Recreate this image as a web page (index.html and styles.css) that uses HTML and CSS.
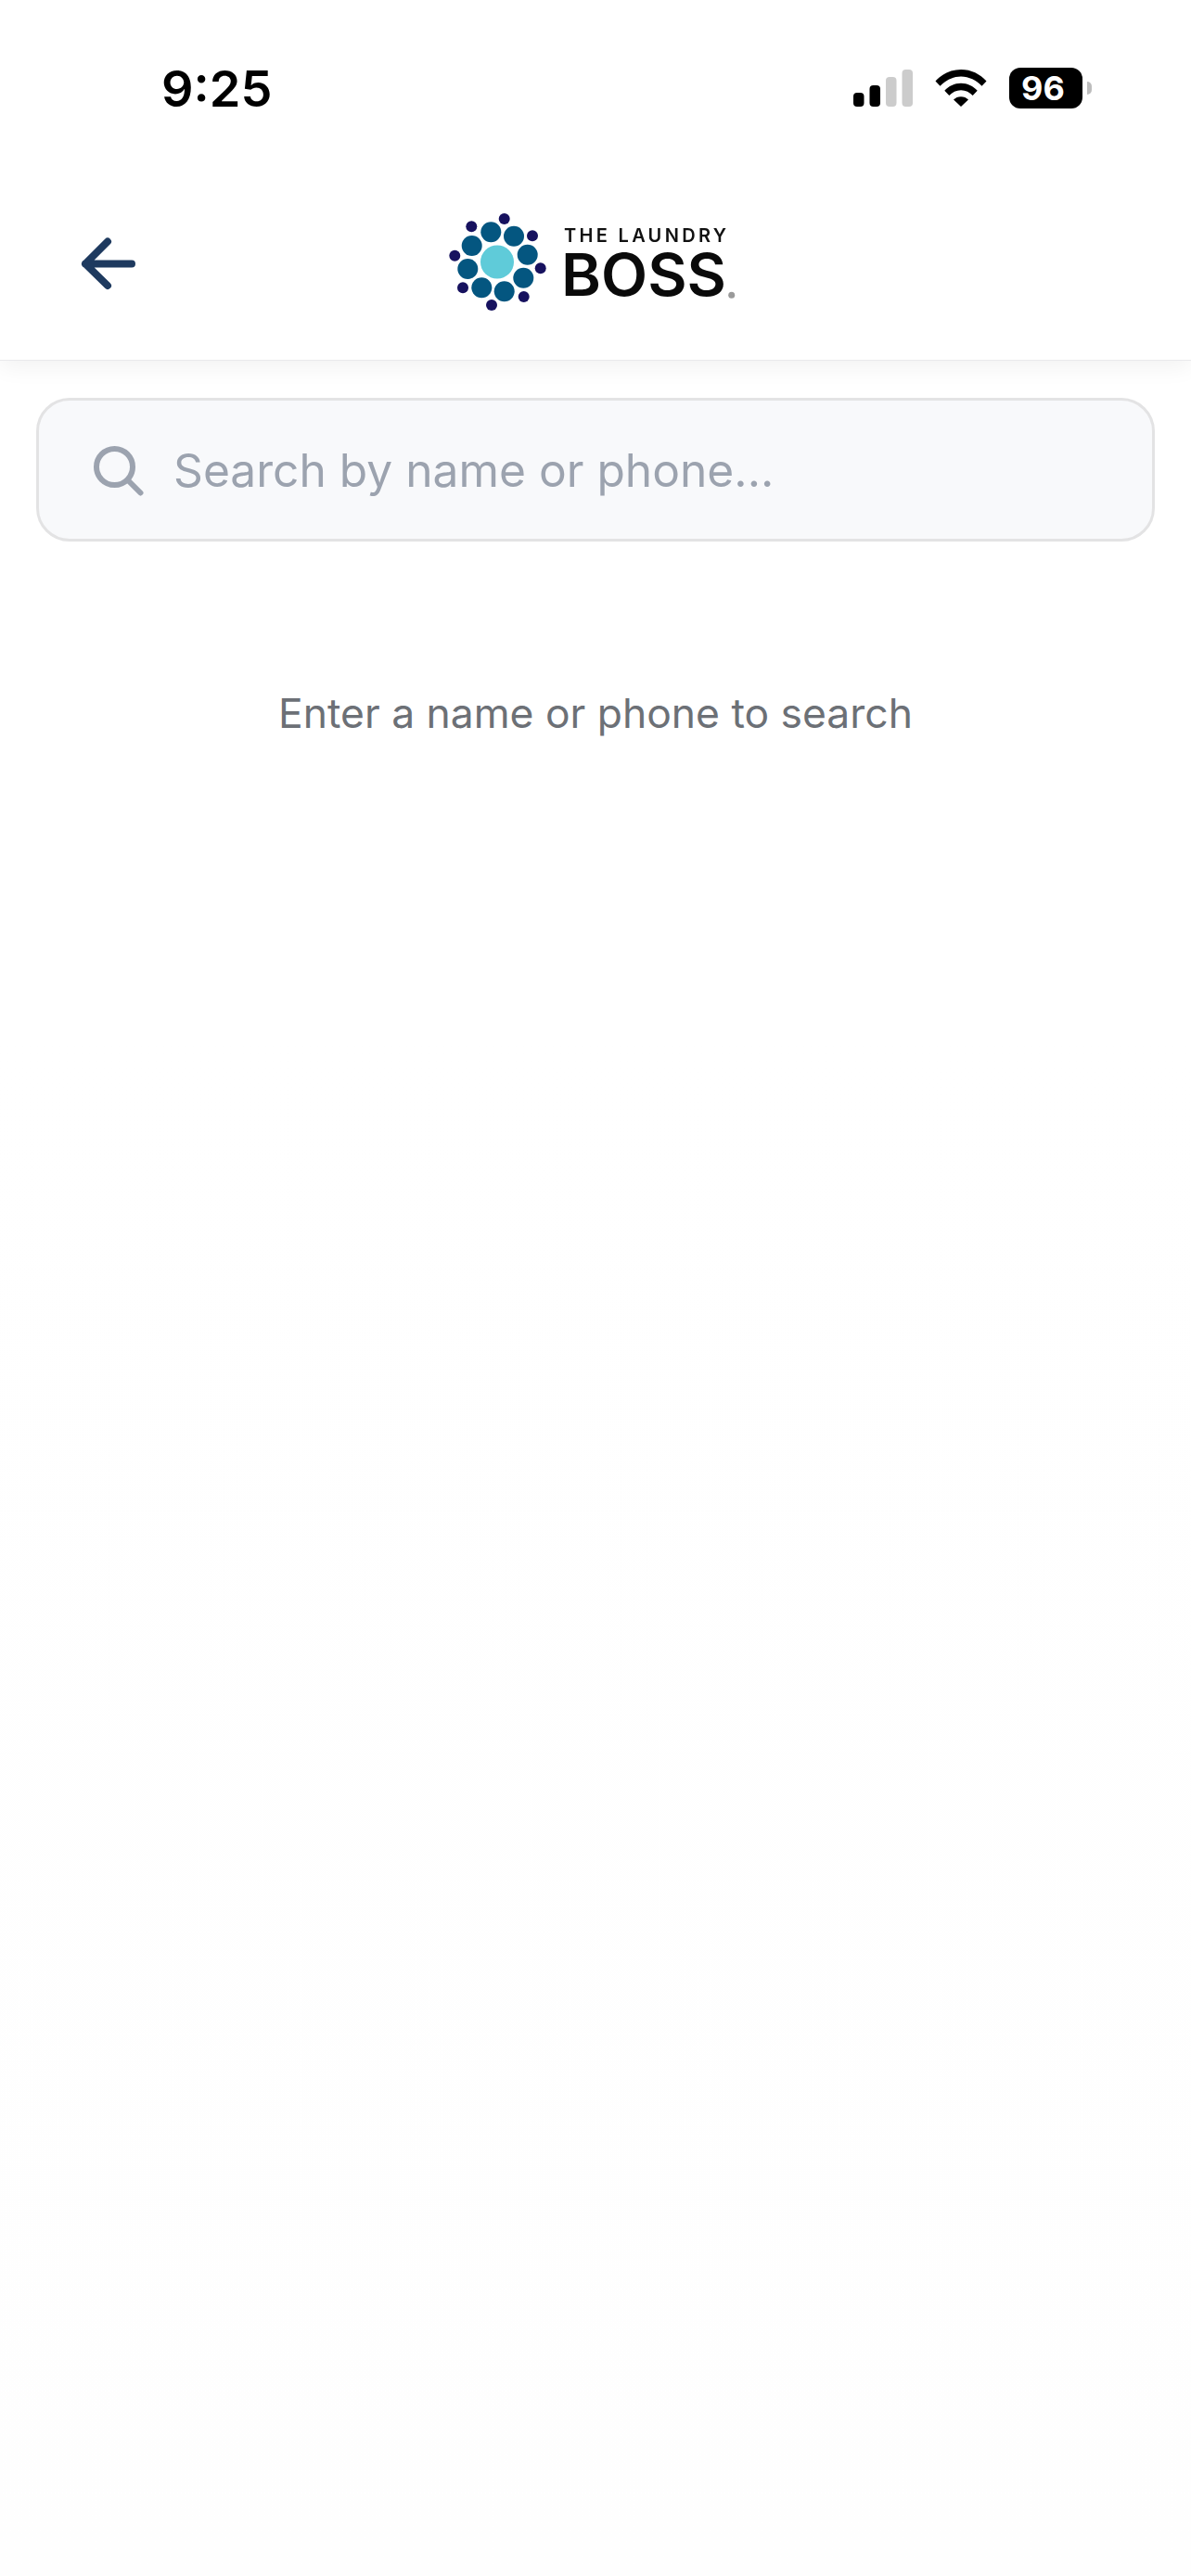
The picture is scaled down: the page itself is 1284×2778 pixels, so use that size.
FILE: index.html
```html
<!DOCTYPE html>
<html lang="en">
<head>
<meta charset="utf-8">
<title>The Laundry Boss - Search</title>
<link rel="stylesheet" href="styles.css">
</head>
<body>
<div class="status-bar">
  <span class="clock">9:25</span>
  <div class="status-icons">
    <svg class="signal" width="64" height="40" viewBox="0 0 64 40">
      <rect class="on" x="0" y="25" width="11.5" height="15" rx="4"/>
      <rect class="on" x="17.5" y="17" width="11.5" height="23" rx="4"/>
      <rect class="off" x="35" y="8" width="11.5" height="32" rx="4"/>
      <rect class="off" x="52.5" y="0" width="11.5" height="40" rx="4"/>
    </svg>
    <svg class="wifi" width="56" height="40" viewBox="0 0 56 40">
      <path d="M0.5 12.5C7.5 4.8 17 0 28 0s20.500 4.800 27.500 12.500l-5 5.300C44.600 11.700 36.700 7.500 28 7.500S11.400 11.700 5.500 17.800z"/>
      <path d="M10.300 22.800C14.800 17.900 21 14.800 28 14.800s13.200 3.100 17.700 8l-5 5.300C37.400 24.500 33 22.300 28 22.300s-9.400 2.200-12.700 5.800z"/>
      <path d="M20 32.600c2-2.200 4.900-3.400 8-3.400s6 1.200 8 3.400L28 40z"/>
    </svg>
    <div class="battery">
      <div class="battery-body">96</div>
      <div class="battery-nub"></div>
    </div>
  </div>
</div>

<header class="app-header">
  <button class="back" aria-label="Back">
    <svg width="70" height="60" viewBox="0 0 70 60">
      <path d="M36 6.500L12 30.500L36 54M12 30.500H62" />
    </svg>
  </button>
  <svg class="logo" width="320" height="110" viewBox="480 230 320 110">
    <g class="dot-center"><circle cx="536" cy="283.500" r="18"/></g>
    <g class="dot-mid">
      <circle cx="529.300" cy="251.300" r="11"/>
      <circle cx="554" cy="255.700" r="11"/>
      <circle cx="568.700" cy="275.700" r="11"/>
      <circle cx="564.300" cy="300.700" r="11"/>
      <circle cx="543.700" cy="315.300" r="11"/>
      <circle cx="519.300" cy="311.300" r="11"/>
      <circle cx="504.300" cy="291" r="11"/>
      <circle cx="508.700" cy="266" r="11"/>
    </g>
    <g class="dot-small">
      <circle cx="543.700" cy="237" r="6"/>
      <circle cx="574" cy="255.300" r="6"/>
      <circle cx="582.700" cy="290.300" r="6"/>
      <circle cx="564.700" cy="321" r="6"/>
      <circle cx="530" cy="330" r="6"/>
      <circle cx="499" cy="311.300" r="6"/>
      <circle cx="490.300" cy="276.700" r="6"/>
      <circle cx="508.300" cy="245.300" r="6"/>
    </g>
    <text class="logo-top" x="608" y="262" textLength="175" lengthAdjust="spacing">THE LAUNDRY</text>
    <text class="logo-main" x="605" y="320" textLength="178" lengthAdjust="spacingAndGlyphs">BOSS</text>
    <circle class="logo-dot" cx="788.700" cy="319.300" r="3.500"/>
  </svg>
  <div class="header-end"></div>
</header>

<main class="content">
  <div class="search-box">
    <svg class="search-icon" width="54" height="54" viewBox="0 0 54 54">
      <circle cx="22.500" cy="22.500" r="19.500"/>
      <path d="M36.500 36.500L50.500 50.500"/>
    </svg>
    <span class="placeholder">Search by name or phone...</span>
  </div>
  <p class="hint">Enter a name or phone to search</p>
</main>
</body>
</html>
```

FILE: styles.css
```css
* { box-sizing: border-box; }

html, body {
  margin: 0;
  padding: 0;
  height: 100%;
}

body {
  background: linear-gradient(#fff, #fff 40%, #fefefe);
  font-family: Inter, "Liberation Sans", sans-serif;
  overflow: hidden;
}

.status-bar {
  position: relative;
  z-index: 1;
  height: 180px;
  background: #fff;
  display: flex;
  justify-content: space-between;
  align-items: flex-start;
  padding: 72px 107px 0 174px;
}

.clock {
  font-size: 54px;
  font-weight: 600;
  line-height: 48px;
  color: #000;
}

.status-icons {
  display: flex;
  align-items: flex-start;
  padding-top: 1px;
}

.signal { margin: 2px 24px 0 0; }
.signal .on { fill: #000; }
.signal .off { fill: #ccc; }

.wifi { margin: 2px 24px 0 0; }
.wifi path { fill: #000; }

.battery {
  display: flex;
  align-items: center;
}

.battery-body {
  width: 79px;
  height: 44px;
  border-radius: 12px;
  background: #000;
  color: #fff;
  font-size: 36px;
  font-weight: 700;
  line-height: 44px;
  text-align: center;
  padding-right: 6px;
}

.battery-nub {
  width: 5px;
  height: 14px;
  margin-left: 5px;
  background: #bdbdbd;
  border-radius: 0 7px 7px 0;
}

.app-header {
  height: 209px;
  background: #fff;
  border-bottom: 1px solid #e9e9ec;
  box-shadow: 0 6px 24px rgba(0, 0, 0, 0.06);
  display: grid;
  grid-template-columns: 1fr auto 1fr;
  align-items: center;
  padding: 0 84px 0 80px;
}

.back {
  justify-self: start;
  border: 0;
  padding: 0;
  background: none;
  display: flex;
}

.back path {
  fill: none;
  stroke: #1e3a5f;
  stroke-width: 8;
  stroke-linecap: round;
  stroke-linejoin: round;
}

.logo {
  display: block;
  filter: blur(0.5px);
}
.dot-center circle { fill: #5fcbd9; }
.dot-mid circle { fill: #045680; }
.dot-small circle { fill: #17125f; }
.logo-dot { fill: #9a9a9a; }

.logo-top {
  font-family: Inter, sans-serif;
  font-size: 20px;
  font-weight: 600;
  fill: #111;
}

.logo-main {
  font-family: Inter, sans-serif;
  font-size: 63px;
  font-weight: 600;
  fill: #0a0a0a;
}

.content {
  padding: 40px 39px 0;
}

.search-box {
  height: 155px;
  background: #f8f9fb;
  border: 3px solid #e3e3e4;
  border-radius: 36px;
  display: flex;
  align-items: center;
  gap: 32px;
  padding: 0 0 0 59px;
}

.search-icon {
  flex: none;
  margin-top: 2px;
}

.search-icon circle,
.search-icon path {
  fill: none;
  stroke: #9ca3af;
  stroke-width: 6;
  stroke-linecap: round;
}

.placeholder {
  font-size: 49.7px;
  color: #9ca3af;
  line-height: 60px;
}

.hint {
  margin: 157px 0 0;
  text-align: center;
  font-size: 44.4px;
  line-height: 56px;
  color: #6c7076;
}
```
